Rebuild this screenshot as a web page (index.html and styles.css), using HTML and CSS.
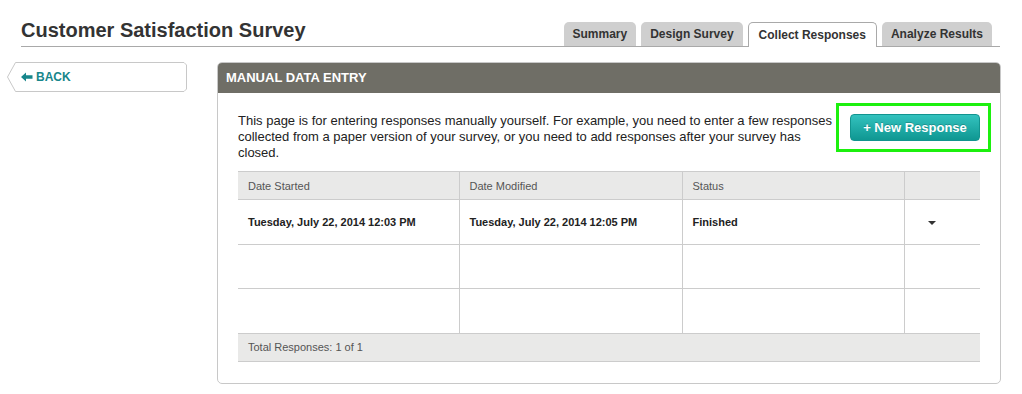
FILE: index.html
```html
<!DOCTYPE html>
<html lang="en">
<head>
  <meta charset="UTF-8" />
  <title>Customer Satisfaction Survey - Collect Responses</title>
  <link rel="stylesheet" href="styles.css">
</head>
<body>

  <!-- Header -->
  <header class="page-header">
    <h1 class="page-title">Customer Satisfaction Survey</h1>
    <nav class="tabs">
      <a href="#" class="tab">Summary</a>
      <a href="#" class="tab">Design Survey</a>
      <a href="#" class="tab active">Collect Responses</a>
      <a href="#" class="tab">Analyze Results</a>
    </nav>
  </header>

  <div class="main">
    <!-- Sidebar -->
    <aside class="sidebar">
      <a href="#" class="back-button">
        <svg class="back-shape" width="180" height="30" viewBox="0 0 180 30">
          <polygon points="8.5,0.5 177,0.5 179.5,3 179.5,27 177,29.5 8.5,29.5 0.5,15" fill="#fff" stroke="#c8c8c8" />
        </svg>
        <span class="back-label">
          <svg width="12" height="10" viewBox="0 0 12 10"><path d="M0 5 L5 0.5 L5 3.3 L11.5 3.3 L11.5 6.7 L5 6.7 L5 9.5 Z" fill="#17868b"/></svg>
          BACK
        </span>
      </a>
    </aside>

    <!-- Manual data entry panel -->
    <section class="panel">
      <div class="panel-header">Manual Data Entry</div>
      <div class="panel-body">
        <div class="intro">
          <p>This page is for entering responses manually yourself. For example, you need to enter a few responses collected from a paper version of your survey, or you need to add responses after your survey has closed.</p>
          <div class="highlight">
            <button class="new-response">+ New Response</button>
          </div>
        </div>

        <table class="responses">
          <colgroup>
            <col style="width: 221px">
            <col style="width: 223px">
            <col style="width: 222px">
            <col>
          </colgroup>
          <thead>
            <tr>
              <th>Date Started</th>
              <th>Date Modified</th>
              <th>Status</th>
              <th></th>
            </tr>
          </thead>
          <tbody>
            <tr>
              <td>Tuesday, July 22, 2014 12:03 PM</td>
              <td>Tuesday, July 22, 2014 12:05 PM</td>
              <td>Finished</td>
              <td class="menu-cell"><span class="caret"></span></td>
            </tr>
            <tr><td></td><td></td><td></td><td></td></tr>
            <tr><td></td><td></td><td></td><td></td></tr>
          </tbody>
          <tfoot>
            <tr>
              <td colspan="4">Total Responses: 1 of 1</td>
            </tr>
          </tfoot>
        </table>
      </div>
    </section>
  </div>

</body>
</html>
```

FILE: styles.css
```css
body {
  margin: 0;
  font-family: "Liberation Sans", Arial, sans-serif;
  background-color: #fff;
  color: #222;
}

/* Header */
.page-header {
  margin: 0 22px 0 21px;
  padding-top: 20px;
  display: flex;
  align-items: flex-end;
  justify-content: space-between;
  border-bottom: 1px solid #a9a9a9;
  height: 26px;
}

.page-title {
  margin: 0 0 5px;
  font-size: 20px;
  font-weight: bold;
  color: #333;
  line-height: 22px;
}

.tabs {
  display: flex;
  gap: 5px;
  margin-right: 8px;
  margin-bottom: -1px;
}

.tab {
  display: block;
  height: 24px;
  line-height: 24px;
  padding: 0 9px;
  background-color: #cfcfcf;
  color: #333;
  font-size: 12px;
  font-weight: bold;
  text-decoration: none;
  border-radius: 5px 5px 0 0;
  box-sizing: border-box;
}

.tab.active {
  background-color: #fff;
  border: 1px solid #a9a9a9;
  border-bottom: none;
  height: 25px;
  line-height: 25px;
  padding: 0 10px;
}

/* Layout */
.main {
  display: flex;
  align-items: flex-start;
  gap: 30px;
  padding: 15px 0 0 7px;
}

/* Back button */
.sidebar {
  width: 180px;
  flex-shrink: 0;
}

.back-button {
  position: relative;
  display: block;
  height: 30px;
  text-decoration: none;
}

.back-shape {
  position: absolute;
  left: 0;
  top: 0;
}

.back-label {
  position: relative;
  display: flex;
  align-items: center;
  gap: 3px;
  height: 30px;
  padding-left: 14px;
  color: #17868b;
  font-size: 12px;
  font-weight: bold;
}

/* Panel */
.panel {
  width: 784px;
  border: 1px solid #c8c8c8;
  border-radius: 5px;
  box-sizing: border-box;
  overflow: hidden;
}

.panel-header {
  background-color: #6f6e66;
  color: #fff;
  height: 30px;
  line-height: 30px;
  padding-left: 8px;
  font-size: 13px;
  font-weight: bold;
  text-transform: uppercase;
}

.panel-body {
  padding: 12px 20px 21px;
}

.intro {
  display: flex;
  align-items: flex-start;
  gap: 18px;
}

.intro p {
  flex: 1;
  margin: 8px 0 0;
  font-size: 13px;
  line-height: 16px;
  color: #222;
}

.highlight {
  position: relative;
  padding: 9px 0 0;
}

.highlight::after {
  content: "";
  position: absolute;
  left: -14px;
  right: -11px;
  top: -2px;
  bottom: -11px;
  border: 3px solid #1cf00e;
}

.new-response {
  width: 130px;
  height: 27px;
  border: 1px solid #12948f;
  border-radius: 4px;
  background: linear-gradient(to bottom, #33c2be, #0f9792);
  color: #fff;
  font-family: "Liberation Sans", Arial, sans-serif;
  font-size: 13px;
  font-weight: bold;
  text-shadow: 0 -1px 0 rgba(0, 0, 0, 0.2);
  cursor: pointer;
}

/* Table */
.responses {
  width: 742px;
  margin-top: 10px;
  border-collapse: collapse;
  table-layout: fixed;
  font-size: 11px;
}

.responses th {
  height: 27px;
  background-color: #e9e9e8;
  color: #555;
  font-weight: normal;
  text-align: left;
  padding: 0 10px;
  border-top: 1px solid #ccc;
  border-bottom: 1px solid #ccc;
}

.responses td {
  height: 43.6px;
  padding: 0 10px;
  font-weight: bold;
  color: #222;
  border-bottom: 1px solid #ccc;
}

.responses th + th,
.responses td + td {
  border-left: 1px solid #ccc;
}

.responses tfoot td {
  height: 27px;
  background-color: #e9e9e8;
  color: #555;
  font-weight: normal;
}

.responses .menu-cell {
  padding-left: 23px;
}

.caret {
  display: inline-block;
  width: 0;
  height: 0;
  border-left: 4px solid transparent;
  border-right: 4px solid transparent;
  border-top: 4px solid #333;
  vertical-align: middle;
}
```
